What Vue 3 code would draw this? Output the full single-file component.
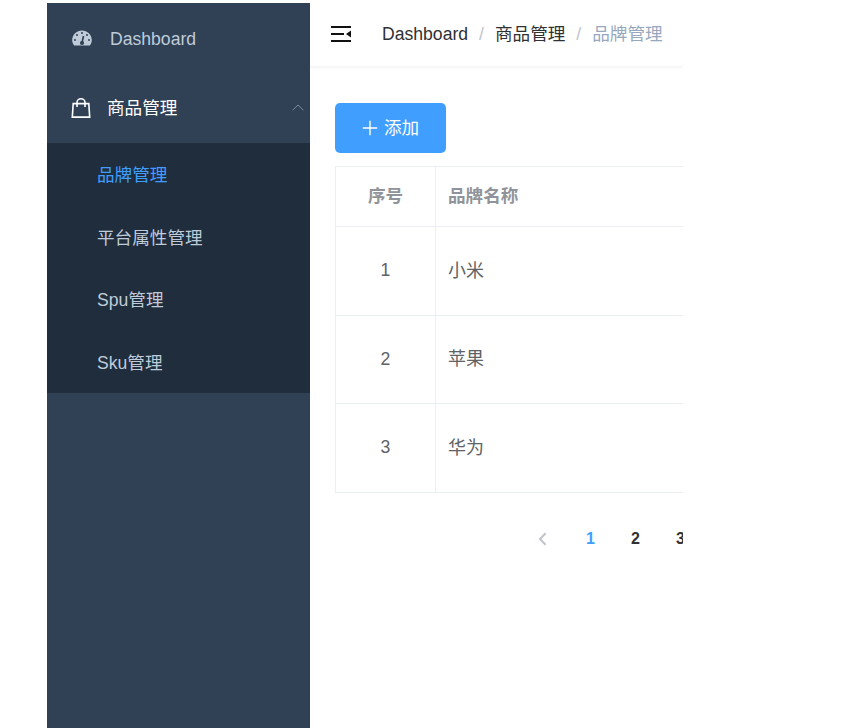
<script setup>
const subs = ['品牌管理', '平台属性管理', 'Spu管理', 'Sku管理']
const rows = [
  { id: 1, name: '小米' },
  { id: 2, name: '苹果' },
  { id: 3, name: '华为' },
]
</script>

<template>
  <div class="page">
    <aside class="sidebar">
      <div class="menu-item dash">
        <svg class="gauge" viewBox="0 0 20 16" width="20" height="16">
          <path fill="#bfcbd9" d="M10 .4C4.600.4.200 4.700.200 10c0 2 .6 3.800 1.700 5.200.2.300.5.400.8.400h14.600c.3 0 .6-.1.8-.4 1.100-1.400 1.700-3.200 1.700-5.200C19.800 4.700 15.400.4 10 .4z" />
          <g fill="#304156">
            <circle cx="10" cy="3" r="1" />
            <circle cx="5" cy="5" r="1" />
            <circle cx="15" cy="5" r="1" />
            <circle cx="3" cy="10" r="1" />
            <circle cx="17" cy="10" r="1" />
            <circle cx="10" cy="13" r="2.100" />
          </g>
          <path d="M10 13l1.500-7" stroke="#304156" stroke-width="1.600" fill="none" />
        </svg>
        <span>Dashboard</span>
      </div>
      <div class="menu-item group">
        <svg class="bag" viewBox="0 0 20 20" width="20" height="20" fill="none" stroke="#fff" stroke-width="1.600">
          <path d="M2.200 5.600h15.600l.9 13.500H1.300z" />
          <path d="M6 9V4.400a4 3.600 0 0 1 8 0V9" />
        </svg>
        <span class="label">商品管理</span>
        <svg class="arrow" viewBox="0 0 12 7" width="12" height="7" fill="none" stroke="#7e8a99" stroke-width="1">
          <path d="M0.600 6.200L6 1l5.400 5.200" />
        </svg>
      </div>
      <ul class="sub">
        <li v-for="(s, i) in subs" :key="s" :class="{ active: i === 0 }">{{ s }}</li>
      </ul>
    </aside>

    <main class="main">
      <header class="topbar">
        <svg class="fold" viewBox="0 0 20 16" width="20" height="16" fill="#111">
          <rect x="0" y="0" width="20" height="2" />
          <rect x="0" y="7" width="13" height="2" />
          <rect x="0" y="14" width="20" height="2" />
          <path d="M20 4.500v7L15 8z" />
        </svg>
        <nav class="crumbs">
          <span>Dashboard</span>
          <span class="sep">/</span>
          <span class="cjk">商品管理</span>
          <span class="sep">/</span>
          <span class="cjk last">品牌管理</span>
        </nav>
      </header>

      <section class="content">
        <button class="add" type="button">
          <svg viewBox="0 0 16 16" width="16" height="16" stroke="#fff" stroke-width="1.400" fill="none">
            <path d="M8 .8v14.400M.8 8h14.400" />
          </svg>
          <span class="cjk">添加</span>
        </button>

        <div class="table">
          <div class="row head">
            <div class="cell c1"><span class="cjk">序号</span></div>
            <div class="cell c2"><span class="cjk">品牌名称</span></div>
          </div>
          <div v-for="r in rows" :key="r.id" class="row body">
            <div class="cell c1">{{ r.id }}</div>
            <div class="cell c2"><span class="name">{{ r.name }}</span></div>
          </div>
        </div>

        <div class="pager">
          <svg class="prev" viewBox="0 0 9 14" width="9" height="14" fill="none" stroke="#c0c4cc" stroke-width="2">
            <path d="M7.600 1.200L2 7l5.600 5.800" />
          </svg>
          <span class="num on">1</span>
          <span class="num">2</span>
          <span class="num">3</span>
        </div>
      </section>
    </main>
  </div>
</template>

<style>
html, body {
  margin: 0;
  background: #fff;
}
</style>

<style scoped>
.page {
  display: flex;
  height: 725px;
  padding: 3px 0 0 47px;
  font-family: "Liberation Sans", "Noto Sans CJK SC", sans-serif;
  font-size: 17.6px;
}
.sidebar {
  width: 263px;
  flex: none;
  background: #304156;
  color: #bfcbd9;
}
.menu-item {
  display: flex;
  align-items: center;
}
.dash {
  height: 70px;
  padding-left: 25px;
  gap: 18px;
}
.dash span {
  font-size: 17.6px;
  margin-top: 2px;
}
.group {
  height: 70px;
  padding-left: 24px;
  color: #fff;
  position: relative;
  gap: 16px;
}
.label {
  margin-bottom: 3px;
}
.arrow {
  position: absolute;
  right: 6px;
  top: 31px;
}
.sub {
  list-style: none;
  margin: 0;
  padding: 0;
  background: #1f2d3d;
}
.sub li {
  box-sizing: border-box;
  height: 62.5px;
  line-height: 62.5px;
  padding: 1px 0 0 50px;
}
.sub li.active {
  color: #409eff;
}
.main {
  width: 373px;
  flex: none;
  overflow: hidden;
}
.topbar {
  height: 63px;
  display: flex;
  align-items: center;
  box-shadow: 0 1px 4px rgba(0, 21, 41, 0.08);
  padding-left: 21px;
  box-sizing: border-box;
}
.fold {
  flex: none;
  margin-right: 31px;
  margin-bottom: 2px;
}
.crumbs {
  display: flex;
  align-items: center;
  white-space: nowrap;
  color: #303133;
}
.sep {
  color: #c0c4cc;
  margin: 0 11px;
}
.crumbs .cjk {
  margin-bottom: 5px;
}
.crumbs .last {
  color: #97a8be;
}
.content {
  padding: 37px 0 0 25px;
  width: 600px;
}
.add {
  display: flex;
  align-items: center;
  gap: 6px;
  width: 111px;
  height: 50px;
  padding: 0 0 0 27px;
  box-sizing: border-box;
  background: #409eff;
  border: 0;
  border-radius: 5px;
  color: #fff;
  font: inherit;
  font-size: 17.6px;
}
.add .cjk {
  margin-bottom: 3px;
}
.table {
  margin-top: 13px;
  border: 1px solid #ebeef5;
  width: 570px;
}
.row {
  display: flex;
}
.row + .row {
  border-top: 1px solid #ebeef5;
}
.head {
  height: 59px;
  color: #909399;
  font-weight: 700;
}
.head .cjk {
  margin-bottom: 5px;
}
.body {
  height: 87.6px;
  color: #606266;
}
.cell {
  display: flex;
  align-items: center;
  box-sizing: border-box;
  font-size: 17.6px;
}
.name {
  font-size: 18px;
  margin-bottom: 4px;
}
.c1 {
  width: 100px;
  justify-content: center;
  border-right: 1px solid #ebeef5;
}
.c2 {
  flex: 1;
  padding-left: 12px;
}
.pager {
  display: flex;
  align-items: center;
  margin-top: 37px;
  padding-left: 203px;
  height: 18px;
  color: #303133;
  font-size: 16px;
  font-weight: 700;
}
.prev {
  margin-right: 39px;
}
.num {
  width: 9px;
  margin-right: 36px;
}
.num.on {
  color: #409eff;
}
</style>
